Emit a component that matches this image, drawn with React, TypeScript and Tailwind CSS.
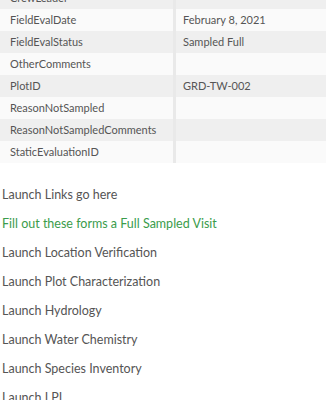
import React from "react";

const rows: [string, string][] = [
  ["CrewLeader", ""],
  ["FieldEvalDate", "February 8, 2021"],
  ["FieldEvalStatus", "Sampled Full"],
  ["OtherComments", ""],
  ["PlotID", "GRD-TW-002"],
  ["ReasonNotSampled", ""],
  ["ReasonNotSampledComments", ""],
  ["StaticEvaluationID", ""],
];

const links = [
  "Launch Location Verification",
  "Launch Plot Characterization",
  "Launch Hydrology",
  "Launch Water Chemistry",
  "Launch Species Inventory",
  "Launch LPI",
];

export default function App() {
  return (
    <div
      className="w-[326px] h-[400px] overflow-hidden bg-white text-[#555555]"
      style={{ fontFamily: "Lato, 'Open Sans', sans-serif" }}
    >
      <div className="-mt-[13px] flex flex-col text-[11px]">
        {rows.map(([k, v], i) => (
          <div
            key={k}
            className={`grid grid-cols-[173px_3px_1fr] h-[22px] items-center ${
              i % 2 === 0 ? "bg-[#efefef]" : "bg-[#fafafa]"
            }`}
          >
            <span className="pl-[10px] truncate">{k}</span>
            <span className="h-full bg-[#e9e9e9]" />
            <span className="pl-[7px] truncate">{v}</span>
          </div>
        ))}
      </div>

      <div className="mt-[17px] pl-[2px] text-[12.5px] leading-[29px]">
        <p>Launch Links go here</p>
        <p className="text-[#3a9c4b]">Fill out these forms a Full Sampled Visit</p>
        {links.map((l) => (
          <p key={l}>{l}</p>
        ))}
      </div>
    </div>
  );
}
